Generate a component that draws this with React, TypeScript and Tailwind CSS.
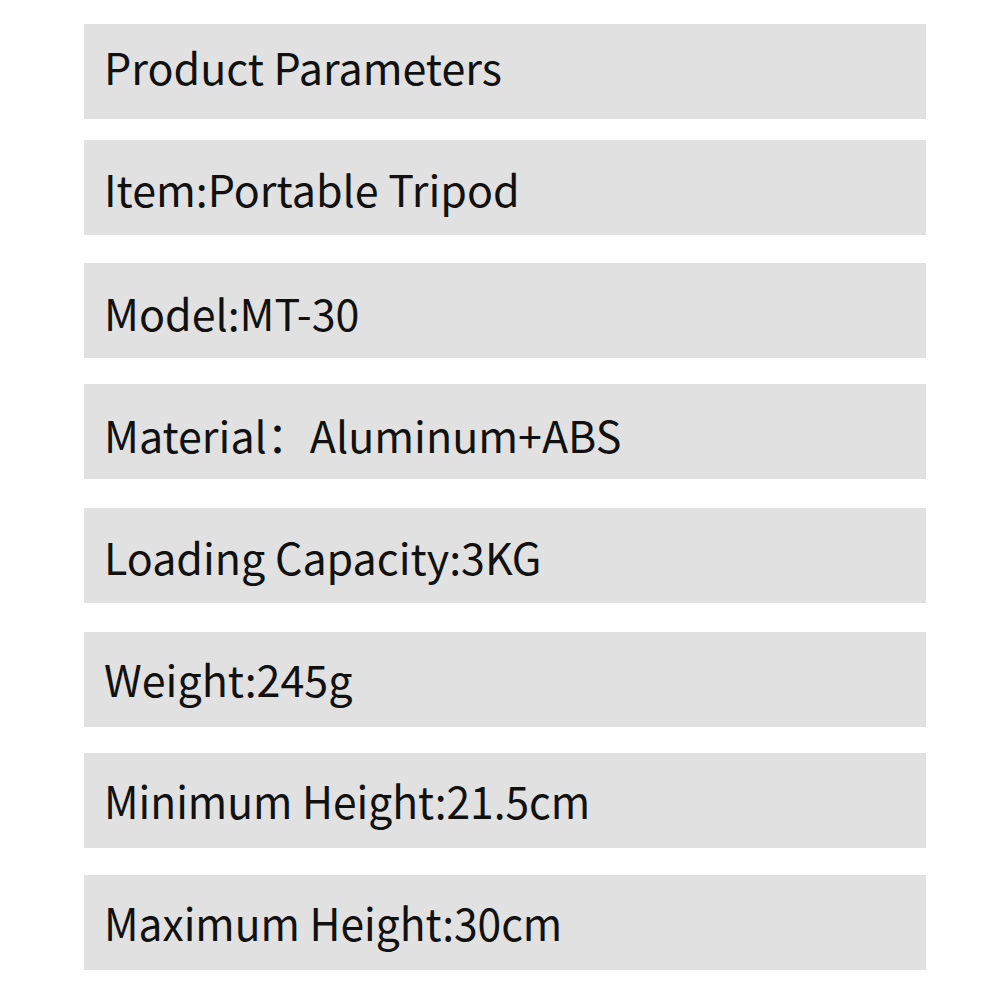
import React from 'react';

type Param = {
    label: string;
    row: string;
    text: string;
};

// Per-row offsets follow the source picture, which is not perfectly even.
const params: Param[] = [
    { label: 'Product Parameters', row: 'mt-[24px] pt-[21px]', text: 'text-[43px]' },
    { label: 'Item:Portable Tripod', row: 'mt-[21px] pt-[27px]', text: 'text-[43px]' },
    { label: 'Model:MT-30', row: 'mt-[28px] pt-[28px]', text: 'text-[43px]' },
    { label: 'Material：Aluminum+ABS', row: 'mt-[26px] pt-[29px]', text: 'text-[43px]' },
    { label: 'Loading Capacity:3KG', row: 'mt-[29px] pt-[27px]', text: 'text-[43px]' },
    { label: 'Weight:245g', row: 'mt-[29px] pt-[25px]', text: 'text-[43px]' },
    { label: 'Minimum Height:21.5cm', row: 'mt-[26px] pt-[24px]', text: 'text-[45px] scale-x-[0.945]' },
    { label: 'Maximum Height:30cm', row: 'mt-[27px] pt-[24px]', text: 'text-[45px] scale-x-[0.945]' },
];

function ParamRow({ label, row, text }: Omit<Param, 'key'>) {
    return (
        <div className={`${row} h-[95px] bg-[#e1e1e1] flex items-start pl-[20px]`}>
            <span className={`${text} origin-left leading-none whitespace-nowrap text-[#111]`}>{label}</span>
        </div>
    );
}

export default function App() {
    return (
        <div
            className="w-[1000px] h-[1000px] bg-white pl-[84px] pr-[74px] overflow-hidden"
            style={{ fontFamily: '"Noto Sans CJK SC", "Noto Sans", sans-serif' }}
        >
            {params.map((p) => (
                <ParamRow key={p.label} {...p} />
            ))}
        </div>
    );
}
